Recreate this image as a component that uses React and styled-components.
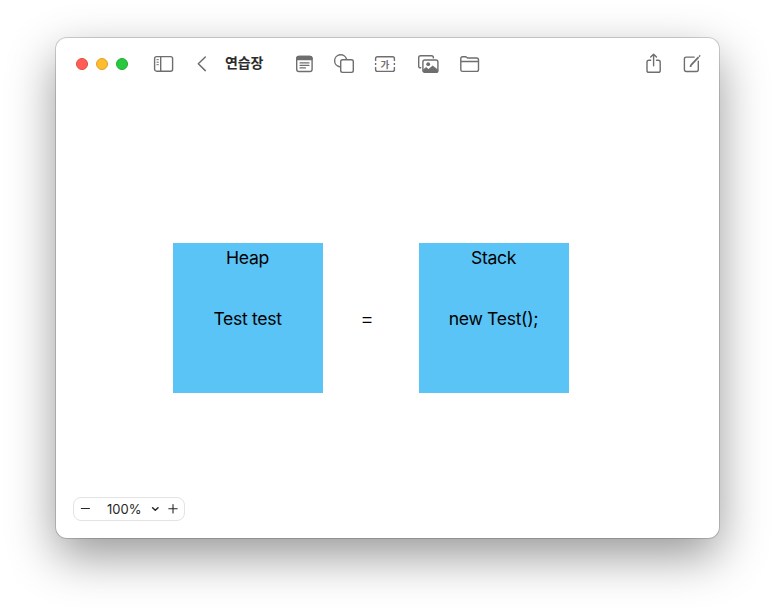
import React from "react";
import styled, { createGlobalStyle } from "styled-components";

const GlobalStyle = createGlobalStyle`
  * { box-sizing: border-box; }
  body { margin: 0; background: #fff; overflow: hidden; }
`;

const Desktop = styled.div`
  width: 775px;
  height: 612px;
  padding: 38px 56px 74px;
  background: #fff;
  overflow: hidden;
  font-family: Inter, "Noto Sans CJK KR", sans-serif;
`;

const Window = styled.main`
  display: flex;
  flex-direction: column;
  width: 663px;
  height: 500px;
  border-radius: 11px;
  background: #fff;
  box-shadow: 0 0 0 1px rgba(0, 0, 0, 0.17), 0 18px 48px rgba(0, 0, 0, 0.41);
`;

const Toolbar = styled.header`
  display: flex;
  align-items: center;
  height: 52px;
  padding: 0 18px 0 20px;
`;

const TrafficLights = styled.div`
  display: flex;
  gap: 8px;
  margin-right: 25px;
`;

const Light = styled.span`
  width: 12px;
  height: 12px;
  border-radius: 50%;
  background: ${(p) => p.$fill};
  border: 1px solid ${(p) => p.$edge};
`;

const ToolButton = styled.button`
  display: flex;
  flex: none;
  padding: 0;
  margin: 0 0 0 ${(p) => p.$before || 0}px;
  border: 0;
  background: none;
  color: #6e6e6e;
`;

const Glyph = styled.svg`
  display: block;
  fill: none;
  stroke: currentColor;
  stroke-width: 1.4;
  stroke-linecap: round;
  stroke-linejoin: round;
`;

const Title = styled.h1`
  width: 40px;
  margin: 0 0 4px 18px;
  font: 700 14px/20px "Noto Sans CJK KR", sans-serif;
  letter-spacing: -0.1px;
  white-space: nowrap;
  color: #2b2b2b;
`;

const Spacer = styled.div`
  flex: 1;
`;

const Board = styled.section`
  display: flex;
  flex: 1;
  align-items: flex-start;
  padding: 153px 0 0 117px;
`;

const Box = styled.div`
  width: 150px;
  height: 150px;
  background: #5ac4f7;
  color: #000;
  font-size: 17.6px;
  line-height: 22px;
  text-align: center;
  white-space: nowrap;
`;

const BoxTitle = styled.div`
  padding: 4px 1px 0 0;
  letter-spacing: -0.3px;
`;

const BoxValue = styled.div`
  padding: 39px 1px 0 0;
  letter-spacing: -0.33px;
`;

const Equals = styled.div`
  width: 96px;
  padding: 64px 8px 0 0;
  font-size: 21.5px;
  font-weight: 300;
  line-height: 22px;
  text-align: center;
`;

const Footer = styled.footer`
  padding: 0 0 17px 17px;
`;

const ZoomControl = styled.div`
  display: flex;
  align-items: center;
  width: 112px;
  height: 24px;
  padding-left: 5.5px;
  border: 1px solid #e3e3e3;
  border-radius: 8px;
  color: #262626;
`;

const ZoomValue = styled.span`
  width: 35px;
  margin: 0 9px 0 16.5px;
  font-size: 13px;
  line-height: 22px;
  letter-spacing: 0;
  white-space: nowrap;
`;

const IconGlyph = ({ width, height = 24, children }) => (
  <Glyph width={width} height={height} viewBox={`0 0 ${width} ${height}`}>
    {children}
  </Glyph>
);

const GlyphLabel = styled.text`
  font: 700 9.5px "Noto Sans CJK KR", sans-serif;
  fill: currentColor;
  stroke: none;
`;

export default function App() {
  return (
    <Desktop>
      <GlobalStyle />
      <Window>
        <Toolbar>
          <TrafficLights>
            <Light $fill="#ff5f57" $edge="#e2483f" />
            <Light $fill="#febc2e" $edge="#e0a028" />
            <Light $fill="#28c840" $edge="#1fad2f" />
          </TrafficLights>

          <ToolButton aria-label="Sidebar">
            <IconGlyph width={21}>
              <rect x="1.6" y="4.6" width="18" height="14.6" rx="2" />
              <path d="M7.7 4.6v14.6" />
              <path d="M3.9 7.7h1.5M3.9 10.2h1.5M3.9 12.7h1.5" strokeWidth="1" />
            </IconGlyph>
          </ToolButton>

          <ToolButton aria-label="Back" $before={22}>
            <IconGlyph width={11}>
              <path d="M9.3 5 2.3 11.8l7 6.8" strokeWidth="1.5" />
            </IconGlyph>
          </ToolButton>

          <Title>연습장</Title>

          <ToolButton aria-label="Note" $before={30}>
            <IconGlyph width={20}>
              <rect x="1.7" y="4.5" width="15.4" height="15" rx="2.2" />
              <path d="M2 7.5V6.4q0-1.9 1.9-1.9h11q1.9 0 1.9 1.9v1.1z" fill="currentColor" />
              <path d="M5 10.9h9M5 13.4h9M5 15.9h5.5" strokeWidth="1.1" />
            </IconGlyph>
          </ToolButton>

          <ToolButton aria-label="Shape" $before={18}>
            <IconGlyph width={22}>
              <path d="M6.6 14.8A6.1 6.1 0 1 1 13.6 7.2" />
              <rect x="7.7" y="7.8" width="12.6" height="12.6" rx="1.8" />
            </IconGlyph>
          </ToolButton>

          <ToolButton aria-label="Text box" $before={19}>
            <IconGlyph width={22}>
              <path d="M1.6 8.9V6.6q0-1.9 1.9-1.9h15q1.9 0 1.9 1.9v2.3M1.6 15.1v2.4q0 1.9 1.9 1.9h15q1.9 0 1.9-1.9v-2.4" strokeLinecap="butt" />
              <path d="M1.6 11v2M20.4 11v2" strokeLinecap="butt" />
              <GlyphLabel x="6.5" y="15.5">가</GlyphLabel>
            </IconGlyph>
          </ToolButton>

          <ToolButton aria-label="Media" $before={21}>
            <IconGlyph width={23}>
              <path d="M3.7 15.8h-.1q-1.9 0-1.9-1.9V5.7q0-1.9 1.9-1.9h10.9q1.9 0 1.9 1.9v.2" />
              <rect x="5.9" y="8" width="15" height="12.3" rx="1.9" />
              <circle cx="11.2" cy="12.2" r="1.9" fill="currentColor" stroke="none" />
              <path d="M6 17.8 9.2 15.3l2.2 2 4.3-3.5 5.1 4v1q0 1.5-1.5 1.5H7.5Q6 20.3 6 18.8z" fill="currentColor" strokeWidth=".4" />
            </IconGlyph>
          </ToolButton>

          <ToolButton aria-label="Folder" $before={19}>
            <IconGlyph width={21}>
              <path d="M1.8 17.7V6.5q0-1.8 1.8-1.8h2.7q.8 0 1.4.6l.8.7h9.1q1.9 0 1.9 1.9v9.6q0 1.9-1.9 1.9h-14q-1.8 0-1.8-1.7zM1.8 9.5h17.7" />
            </IconGlyph>
          </ToolButton>

          <Spacer />

          <ToolButton aria-label="Share">
            <IconGlyph width={17}>
              <path d="M5.7 8.3H3.9Q2 8.3 2 10.2v8.2q0 1.9 1.9 1.9h9.4q1.9 0 1.9-1.9v-8.2q0-1.9-1.9-1.9h-1.8M8.6 13.8V2.4M5.7 5.1l2.9-2.9 2.9 2.9" />
            </IconGlyph>
          </ToolButton>

          <ToolButton aria-label="Compose" $before={21}>
            <IconGlyph width={18}>
              <path d="M11.2 5.1H3.3q-1.9 0-1.9 1.9v10.6q0 1.9 1.9 1.9h10.1q1.9 0 1.9-1.9V9.2" />
              <path d="m8 13.1 7.6-7.9" strokeWidth="1.8" strokeLinecap="butt" />
              <path d="m7.7 13.4-.4 1 1-.5M16.4 4.2l.4-.4" strokeWidth="1.4" />
            </IconGlyph>
          </ToolButton>
        </Toolbar>

        <Board>
          <Box>
            <BoxTitle>Heap</BoxTitle>
            <BoxValue>Test test</BoxValue>
          </Box>
          <Equals>=</Equals>
          <Box>
            <BoxTitle>Stack</BoxTitle>
            <BoxValue>new Test();</BoxValue>
          </Box>
        </Board>

        <Footer>
          <ZoomControl>
            <IconGlyph width={11} height={12}>
              <path d="M1.4 5.5h8" strokeWidth="1.2" />
            </IconGlyph>
            <ZoomValue>100%</ZoomValue>
            <IconGlyph width={9} height={12}>
              <path d="m1.6 4.7 2.7 2.6L7 4.7" strokeWidth="1.5" />
            </IconGlyph>
            <ToolButton as="span" $before={8}>
              <IconGlyph width={10} height={12}>
                <path d="M.8 5.8h8.4M5 1.6V10" stroke="#262626" strokeWidth="1.1" />
              </IconGlyph>
            </ToolButton>
          </ZoomControl>
        </Footer>
      </Window>
    </Desktop>
  );
}
